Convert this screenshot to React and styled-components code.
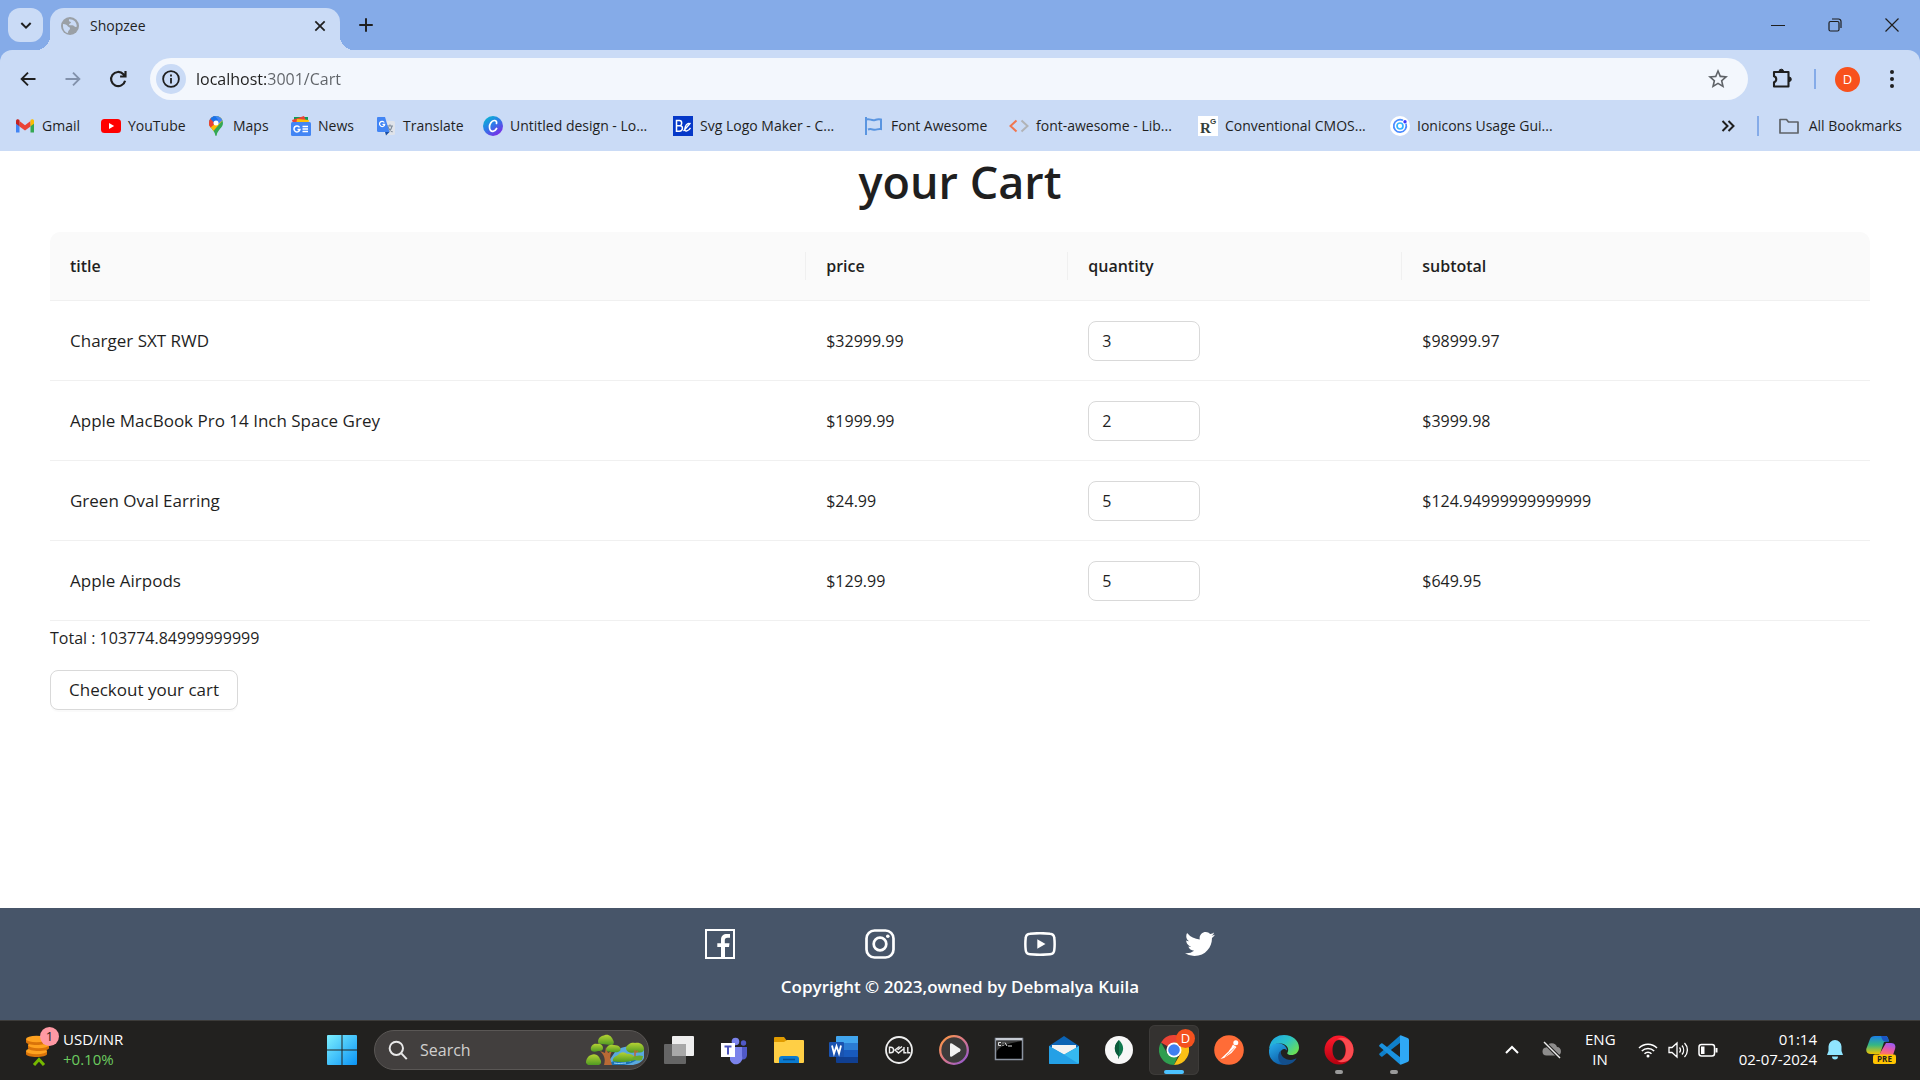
import React, { useState } from "react";
import styled, { createGlobalStyle, css } from "styled-components";
import { IoLogoTwitter } from "react-icons/io5";
import { MdStarBorder } from "react-icons/md";

const GlobalStyle = createGlobalStyle`
  *, *::before, *::after { box-sizing: border-box; }
  body {
    margin: 0;
    background: #fff;
    color: #1f1f1f;
    font-family: "Open Sans", "Noto Sans", sans-serif;
    font-size: 16px;
    line-height: 28px;
  }
  button, input { font: inherit; color: inherit; }
  button { border: 0; background: none; padding: 0; cursor: pointer; }
  a { color: inherit; text-decoration: none; }
  svg { display: block; flex: none; }
`;

const Screen = styled.div`
  min-height: 100vh;
  display: flex;
  flex-direction: column;
`;

/* ---------- browser frame ---------- */

const center = css`
  display: flex;
  align-items: center;
  justify-content: center;
`;

const TabStrip = styled.header`
  display: flex;
  height: 50px;
  padding: 8px 0 0 8px;
  background: #85abe8;
`;

const TabSearch = styled.button`
  ${center}
  width: 35px;
  height: 34px;
  border-radius: 12px;
  background: #cadbf6;
`;

const Tab = styled.div`
  position: relative;
  display: flex;
  align-items: center;
  gap: 11px;
  width: 290px;
  height: 42px;
  margin-left: 7px;
  padding: 0 11px 7px 11px;
  border-radius: 14px 14px 0 0;
  background: #cadbf6;
  font-size: 14px;
  line-height: 20px;

  &::before, &::after {
    content: "";
    position: absolute;
    bottom: 0;
    width: 14px;
    height: 14px;
  }
  &::before {
    right: 100%;
    background: radial-gradient(circle at 0 0, transparent 14px, #cadbf6 14px);
  }
  &::after {
    left: 100%;
    background: radial-gradient(circle at 100% 0, transparent 14px, #cadbf6 14px);
  }
`;

const TabTitle = styled.span`
  flex: 1;
`;

const PlainButton = styled.button`
  ${center}
  width: ${(p) => p.$w || 18}px;
  height: ${(p) => p.$h || 20}px;
`;

const NewTab = styled(PlainButton)`
  width: 34px;
  height: 34px;
  margin-left: 9px;
`;

const WindowControls = styled.div`
  display: flex;
  margin-left: auto;
  height: 34px;
`;

const Chrome = styled.div`
  background: #85abe8;
`;

const Bars = styled.div`
  height: 101px;
  border-radius: 12px 12px 0 0;
  background: #cadbf6;
`;

const Toolbar = styled.nav`
  display: flex;
  align-items: center;
  height: 58px;
  padding: 0 13px 0 5px;
`;

const OmniBox = styled.div`
  display: flex;
  align-items: center;
  flex: 1;
  height: 42px;
  margin: 0 12px 0 10px;
  padding: 0 18px 0 6px;
  border-radius: 21px;
  background: #f3f7fd;
  color: #5f6368;
`;

const SiteInfo = styled.button`
  ${center}
  width: 30px;
  height: 30px;
  margin-right: 10px;
  border-radius: 50%;
  background: #cadbf6;
`;

const Address = styled.input`
  flex: 1;
  border: 0;
  outline: 0;
  padding: 0;
  color: transparent;
  background: linear-gradient(90deg, #1f1f1f 70px, #5f6368 70px);
  background-clip: text;
  -webkit-background-clip: text;
  font-size: 16px;
`;

const Divider = styled.span`
  width: 2px;
  height: 20px;
  margin: 0 ${(p) => p.$right}px 0 ${(p) => p.$left}px;
  background: #85abe8;
`;

const Avatar = styled.button`
  ${center}
  width: 25px;
  height: 25px;
  margin-right: 17px;
  border-radius: 50%;
  background: #f8511d;
  color: #fff;
  font-size: 13px;
  line-height: 16px;
`;

const BookmarkBar = styled.nav`
  display: flex;
  align-items: center;
  height: 36px;
  padding: 0 18px 0 15px;
  font-size: 14px;
  line-height: 20px;
  white-space: nowrap;
`;

const BookmarkList = styled.div`
  display: grid;
  grid-template-columns: 86px 105px 85px 85px 107px 190px 191px 145px 189px 192px 170px;
  margin-right: auto;
`;

const Bookmark = styled.a`
  display: flex;
  align-items: center;
  gap: 7px;
`;

const Folder = styled(Bookmark)`
  gap: 10px;
`;

/* ---------- cart page ---------- */

const Main = styled.main`
  flex: 1;
  padding: 1px 50px 0;
`;

const Heading = styled.h1`
  margin: 0 0 20px;
  font-size: 45px;
  line-height: 60px;
  font-weight: 600;
  text-align: center;
`;

const CartTable = styled.table`
  width: 100%;
  table-layout: fixed;
  border-collapse: separate;
  border-spacing: 0;
`;

const Col = styled.col`
  width: ${(p) => p.$w};
`;

const Th = styled.th`
  padding: 20px 0;
  border-bottom: 1px solid #f0f0f0;
  background: #fafafa;
  text-align: left;
  font-weight: 600;

  &:first-child { border-top-left-radius: 10px; }
  &:last-child { border-top-right-radius: 10px; }
`;

const ThLabel = styled.span`
  display: block;
  padding: 0 20px;
  border-right: 1px solid #f0f0f0;

  ${Th}:last-child & { border-right: 0; }
`;

const Td = styled.td`
  height: 80px;
  padding: 1px 20px 0;
  border-bottom: 1px solid #f0f0f0;
`;

const TitleCell = styled(Td)`
  font-size: 17px;
`;

const Quantity = styled.input`
  display: block;
  width: 112px;
  height: 40px;
  padding: 0 13px;
  border: 1px solid #d9d9d9;
  border-radius: 8px;
  background: #fff;
  appearance: textfield;
  -moz-appearance: textfield;

  &::-webkit-inner-spin-button, &::-webkit-outer-spin-button {
    appearance: none;
    margin: 0;
  }
`;

const Total = styled.p`
  margin: 0;
  padding: 3px 0 18px;
`;

const Checkout = styled.button`
  height: 40px;
  padding: 0 18px;
  border: 1px solid #d9d9d9;
  border-radius: 8px;
  background: #fff;
  box-shadow: 0 2px 0 rgba(0, 0, 0, 0.02);
  font-size: 17px;
`;

const Footer = styled.footer`
  display: flex;
  flex-direction: column;
  align-items: center;
  height: 112px;
  padding-top: 18px;
  background: #475569;
  color: #fff;
  font-weight: 600;
  font-size: 17px;
`;

const Social = styled.div`
  display: flex;
  gap: 120px;
  margin-bottom: 11px;
`;

const SocialLink = styled.a`
  ${center}
  width: 40px;
  height: 36px;
`;

/* ---------- taskbar ---------- */

const Taskbar = styled.div`
  display: flex;
  align-items: center;
  height: 60px;
  padding: 0 24px 2px 0;
  border-top: 1px solid #3d3c3a;
  background: #22211f;
  color: #fff;
  font-size: 15px;
  line-height: 20px;
`;

const Widget = styled.button`
  display: flex;
  align-items: center;
  gap: 13px;
  width: 317px;
  padding-left: 25px;
  text-align: left;
`;

const Stack = styled.span`
  display: flex;
  flex-direction: column;
  padding-bottom: 2px;
  text-align: ${(p) => p.$align || "left"};
  width: ${(p) => (p.$w ? p.$w + "px" : "auto")};
`;

const Gain = styled.span`
  color: #6ccb5f;
`;

const IconHolder = styled.span`
  position: relative;
  display: block;
`;

const Badge = styled.span`
  ${center}
  position: absolute;
  top: ${(p) => p.$top}px;
  right: ${(p) => p.$right}px;
  width: 19px;
  height: 19px;
  border-radius: 50%;
  background: ${(p) => p.$bg};
  color: ${(p) => p.$fg};
  font-size: 13px;
  line-height: 16px;
`;

const Apps = styled.div`
  display: flex;
  align-items: center;
  gap: 5px;
`;

const AppButton = styled.button`
  ${center}
  position: relative;
  width: 50px;
  height: 50px;
  border-radius: 6px;
  background: ${(p) => (p.$state === "active" ? "#343230" : "transparent")};
  box-shadow: ${(p) => (p.$state === "active" ? "inset 0 0 0 1px #3d3b39" : "none")};

  &::after {
    content: "";
    display: ${(p) => (p.$state ? "block" : "none")};
    position: absolute;
    bottom: 1px;
    width: ${(p) => (p.$state === "active" ? 20 : 8)}px;
    height: 4px;
    border-radius: 2px;
    background: ${(p) => (p.$state === "active" ? "#4cc2ff" : "#9a9a9a")};
  }
`;

const SearchBox = styled.label`
  display: flex;
  align-items: center;
  gap: 12px;
  width: 275px;
  height: 40px;
  margin-left: 2px;
  padding: 0 2px 0 13px;
  border: 1px solid #5a5755;
  border-radius: 20px;
  background: #423f3e;
`;

const SearchInput = styled.input`
  flex: 1;
  min-width: 0;
  border: 0;
  outline: 0;
  padding: 0;
  background: none;
  font-size: 16px;

  &::placeholder { color: #d0cfce; opacity: 1; }
`;

const Tray = styled.div`
  display: flex;
  align-items: center;
  gap: 23px;
  margin-left: auto;
`;

const TrayGroup = styled.button`
  display: flex;
  align-items: center;
  gap: 10px;
  margin-right: -3px;
`;

const Clock = styled.button`
  display: flex;
  align-items: center;
  gap: 10px;
`;

/* ---------- icons ---------- */

const Line = ({ s = 20, w = 2, vb = 24, c = "currentColor", fill = "none", children, ...rest }) => (
  <svg width={s} height={s} viewBox={`0 0 ${vb} ${vb}`} fill={fill} stroke={c} strokeWidth={w} {...rest}>
    {children}
  </svg>
);

const Globe = () => (
  <svg width="18" height="18" viewBox="0 0 18 18">
    <circle cx="9" cy="9" r="9" fill="#9aa0a6" />
    <path d="M2 7c3 0 4 1 5 2.500 1 1 2 .5 2 2s-2 1.500-2 4.500C4 15.500 2 12.500 2 9zM8 2.300c-.5 1.700.5 2.700 2 2.700 0 1.500-2 1.500-2 3 1.500 1 4-.5 5 1 1 1.300 2 1 2.800.8C16 5 12.500 2 8 2.300z" fill="#cadbf6" />
  </svg>
);

const Gmail = () => (
  <svg width="20" height="20" viewBox="0 0 20 20">
    <path d="M1 5v11.500h3.500V8z" fill="#4285f4" />
    <path d="M19 5v11.500h-3.500V8z" fill="#34a853" />
    <path d="M4.500 5v5.500L10 14.500l5.500-4V5L10 9.200z" fill="#ea4335" />
    <path d="M1 5.300C1 3.200 3 2.800 4.500 4v6.300L1 7.700z" fill="#c5221f" />
    <path d="M19 5.300c0-2.100-2-2.500-3.500-1.300v6.300L19 7.700z" fill="#fbbc04" />
  </svg>
);

const YouTube = () => (
  <svg width="20" height="20" viewBox="0 0 20 20">
    <rect y="3" width="20" height="14" rx="3.500" fill="#f00" />
    <path d="M8 7v6l5.200-3z" fill="#fff" />
  </svg>
);

const Maps = () => (
  <svg width="20" height="20" viewBox="0 0 20 20">
    <defs>
      <clipPath id="pin"><path d="M10 0a7 7 0 0 0-7 7c0 5 5.500 6.500 6.300 12.300.1.900 1.300.9 1.400 0C11.500 13.500 17 12 17 7a7 7 0 0 0-7-7z" /></clipPath>
    </defs>
    <g clipPath="url(#pin)">
      <path d="M0 0h20v20H0z" fill="#34a853" />
      <path d="M17 0v4L6.500 16 2 10 10 1z" fill="#fbbc04" />
      <path d="M0 0h8L10 7 4 12 0 8z" fill="#ea4335" />
      <path d="M5 0h14l-3 4.500-4 4L5 3z" fill="#4285f4" />
      <path d="M5 0h4l3 3.500L8 8 3 4z" fill="#1a73e8" />
      <path d="M0 3l3.500-1L8 6.500 4 12 0 8z" fill="#ea4335" />
    </g>
    <circle cx="10" cy="7" r="2.500" fill="#fff" />
  </svg>
);

const News = () => (
  <svg width="20" height="20" viewBox="0 0 20 20">
    <path d="M3 1h14v8H3z" fill="#0c9d58" />
    <path d="M1 4l12-4 3 7H2z" fill="#ea4335" />
    <path d="M6 3l12 1-1 5H5z" fill="#ffc107" />
    <rect y="6" width="20" height="14" rx="1.500" fill="#4285f4" />
    <path d="M8.500 11.300a3 3 0 1 0 .4 2.200H6.500M11.500 10.500H17M11.500 13H17M11.500 15.500H17" fill="none" stroke="#fff" strokeWidth="1.500" />
  </svg>
);

const Translate = () => (
  <svg width="20" height="20" viewBox="0 0 20 20">
    <rect x="8" y="5" width="11" height="14" rx="1.500" fill="#dfe3ea" />
    <path d="M11 10h6M14 8.500V10M16 10c-.5 3-2 5-4 6M12 11c.5 2 2 3.500 4.500 5" stroke="#7f8b99" fill="none" strokeWidth="1.100" />
    <path d="M1.500 1H9l4.500 15H2.500A1.500 1.500 0 0 1 1 14.500V2z" fill="#4285f4" />
    <path d="M9 16h4.500L10 19.500z" fill="#174ea6" />
    <path d="M8.300 6.500a2.600 2.600 0 1 0 .4 1.800H6.500" stroke="#fff" fill="none" strokeWidth="1.200" />
  </svg>
);

const Canva = () => (
  <svg width="20" height="20" viewBox="0 0 20 20">
    <defs>
      <linearGradient id="canva" x1="0" y1="0" x2=".7" y2="1">
        <stop offset="0" stopColor="#00c4cc" /><stop offset=".5" stopColor="#2a7de8" /><stop offset="1" stopColor="#7d2ae8" />
      </linearGradient>
    </defs>
    <circle cx="10" cy="10" r="10" fill="url(#canva)" />
    <path d="M13.500 7.500c.5-1.800-.5-3.200-2.300-3C8.500 4.800 6.500 8 6.500 11s1.500 4.500 3.500 4.300c1.500-.2 2.800-1.300 3.600-2.800" fill="none" stroke="#fff" strokeWidth="1.700" strokeLinecap="round" />
  </svg>
);

const LogoMaker = () => (
  <svg width="20" height="20" viewBox="0 0 20 20">
    <path d="M0 0h20v20H0z" fill="#0538c8" />
    <path d="M3.500 4.500v10.700h2.800c4 0 4-5.500.8-5.500H4h2.500c3 0 2.800-5.200 0-5.200z" fill="none" stroke="#fff" strokeWidth="1.500" />
    <path d="M17 8.300c-.5-1.600-3.500-.8-4.700 2.400s0 4.700 1.600 4.200 3-1.800 3.600-3M10.500 15l7-8" fill="none" stroke="#fff" strokeWidth="1.300" />
  </svg>
);

const Flag = () => (
  <svg width="20" height="20" viewBox="0 0 20 20" fill="none" stroke="#5a95e0" strokeWidth="2">
    <path d="M2 1v18" />
    <path d="M2 3.500c4-1.500 5 1.500 9 .5 2.500-1 4-1 6-.5v9.500c-3-.5-4 .8-6 .8-2.500 0-4-1.500-7-.3" />
  </svg>
);

const Code = () => (
  <svg width="20" height="20" viewBox="0 0 20 20" fill="none" strokeWidth="2">
    <path d="M7.500 4.500 1.500 10l6 5.500" stroke="#f0764f" />
    <path d="M12.500 4.500l6 5.500-6 5.500" stroke="#b1b3b6" />
  </svg>
);

const ResearchGate = () => (
  <svg width="20" height="20" viewBox="0 0 20 20">
    <path d="M0 0h20v20H0z" fill="#fff" />
    <text x="2" y="17" fontFamily="Liberation Serif, serif" fontSize="15" fontWeight="700" fill="#333f3c">R</text>
    <text x="12" y="8" fontFamily="Liberation Sans, sans-serif" fontSize="8" fontWeight="700" fill="#333f3c">G</text>
  </svg>
);

const Ionic = () => (
  <svg width="20" height="20" viewBox="0 0 20 20">
    <circle cx="10" cy="10" r="10" fill="#fff" />
    <path d="M13 4.300a6.300 6.300 0 1 0 3 3.500" fill="none" stroke="#4a8bff" strokeWidth="1.700" />
    <circle cx="10" cy="10" r="3" fill="none" stroke="#35b3ff" strokeWidth="1.700" />
    <circle cx="15" cy="5.800" r="1.700" fill="#3b3bff" />
  </svg>
);

const Puzzle = () => (
  <Line s={24} w={2.1} strokeLinejoin="round">
    <path d="M4 5h14.500v14.500H4v-4.300c3-.7 3-5.200 0-5.900z" />
    <path d="M9 4.500a2.300 2.300 0 0 1 4.600 0zM19 10a2.300 2.300 0 0 1 0 4.600z" fill="currentColor" strokeWidth="1" />
  </Line>
);

const Facebook = () => (
  <svg width="30" height="30" viewBox="0 0 30 30">
    <path d="M1 1h28v28H1z" fill="none" stroke="#fff" strokeWidth="2" />
    <path d="M16 29V18h-3.700v-3.700H16V11c0-4.300 2.300-6 6-6h3v3.700h-2.500c-2 0-2.700 1-2.700 2.600v3H24.500L24 18h-4v11z" fill="#fff" />
  </svg>
);

const Instagram = () => (
  <svg width="30" height="30" viewBox="0 0 30 30" fill="none" stroke="#fff" strokeWidth="2.700">
    <rect x="1.500" y="1.500" width="27" height="27" rx="8" />
    <circle cx="15" cy="15" r="6.300" />
    <circle cx="22.800" cy="7.300" r="1.800" fill="#fff" stroke="none" />
  </svg>
);

const YouTubeOutline = () => (
  <svg width="32" height="24" viewBox="0 0 32 24">
    <path d="M6 1.700Q16 .7 26 1.700 30 2 30.300 6q.7 6 0 12-.3 4-4.300 4.300-10 1-20 0Q2 22 1.700 18q-.7-6 0-12Q2 2 6 1.700z" fill="none" stroke="#fff" strokeWidth="2.500" />
    <path d="M13.300 7.300v9.400L21.500 12z" fill="#fff" />
  </svg>
);

const Coins = () => (
  <svg width="25" height="32" viewBox="0 0 25 32">
    {[13, 7, 1].map((y, i) => (
      <g key={y} transform={`translate(${i === 1 ? 2 : 0} ${y})`}>
        <path d="M1 4v3c0 4 21 4 21 0V4z" fill="#d9730a" />
        <ellipse cx="11.500" cy="4" rx="10.500" ry="3.300" fill="#ffa21f" />
      </g>
    ))}
    <path d="M9 31l5-5.500L19 31" fill="none" stroke="#76b900" strokeWidth="3" />
  </svg>
);

const Windows = () => (
  <svg width="30" height="30" viewBox="0 0 30 30">
    <defs>
      <linearGradient id="win" x1="0" y1="0" x2="1" y2="1">
        <stop offset="0" stopColor="#7df0ff" /><stop offset="1" stopColor="#0a93f5" />
      </linearGradient>
    </defs>
    <path d="M1 0h13.500v14.500H0V1a1 1 0 0 1 1-1zM15.500 0H29a1 1 0 0 1 1 1v13.500H15.500zM0 15.500h14.500V30H1a1 1 0 0 1-1-1zM15.500 15.500H30V29a1 1 0 0 1-1 1H15.500z" fill="url(#win)" />
  </svg>
);

const Landscape = () => (
  <svg width="60" height="32" viewBox="0 0 60 32">
    <defs>
      <linearGradient id="leaf" x1="0" y1="0" x2="0" y2="1">
        <stop offset="0" stopColor="#b5d334" /><stop offset="1" stopColor="#4f9a22" />
      </linearGradient>
    </defs>
    <path d="M29 18c7-7 19-7 29-2v8c-2 4-6 6-11 7H20z" fill="#5aa9df" />
    <path d="M22 31c5-6 18-8 30-6-4 3-8 5-14 6z" fill="#1b72b4" />
    <path d="M32 26c5 1 9 0 13 1M28 29c5 1 8 0 12 0" stroke="#9bdcff" fill="none" />
    <path d="M18 31c2-6 0-10-4-14l5 2 1-6 2 6 5-3c-4 5-3 9-1 15z" fill="#b96a35" />
    <g fill="url(#leaf)">
      <path d="M12 8c0-5 4-6 7-7 4-1 7 2 8 5 2 3 0 5-2 5l-9-1c-3 0-4-1-4-2z" />
      <path d="M5 16c-1-4 3-7 6-6 4-1 6 2 6 4 0 3-3 3-5 3-3 1-6 1-7-1z" />
      <path d="M20 15c1-4 5-5 8-4 5 0 8 3 6 6-3 2-5 1-7 1s-7 0-7-3z" />
      <path d="M0 29c0-4 2-7 5-8 5-2 8 1 9 4 2 3 1 5-1 6H2z" />
      <path d="M27 27c-1-3 3-5 5-6 3-4 7-3 9-1 5-1 6 3 12 4-5 4-20 5-26 3z" />
      <path d="M40 14c1-4 6-6 9-5 5-1 9 2 9 6s-5 4-8 3c-5 2-10 0-10-4z" />
    </g>
    <path d="M49 23v-7M49 19l3-2" stroke="#b96a35" strokeWidth="1.500" />
    <path d="M46 24c4-3 8-3 11-2l-1 4c-3 1-7 1-10-2z" fill="#6aaa2c" />
  </svg>
);

const TaskView = () => (
  <svg width="30" height="30" viewBox="0 0 30 30">
    <rect x="8" y="1" width="22" height="20" rx="1" fill="#eee" />
    <rect x="0" y="9" width="22" height="20" rx="1" fill="#6d6d6d" opacity=".9" />
    <path d="M8 9h14v12H8z" fill="#a8a8a8" />
  </svg>
);

const Teams = () => (
  <svg width="30" height="30" viewBox="0 0 30 30">
    <circle cx="16.500" cy="6.500" r="3.800" fill="#7b83eb" /><circle cx="24.500" cy="8" r="2.700" fill="#5059c9" />
    <path d="M20 12h8v8c0 3-2 5-5 4.500z" fill="#5059c9" />
    <path d="M11 12h12v9a6 6 0 0 1-12 4z" fill="#7b83eb" />
    <path d="M2 8h14v14H2z" fill="#fff" />
    <path d="M5.500 11.500h7M9 11.500v8" stroke="#4b53bc" strokeWidth="2" />
  </svg>
);

const Explorer = () => (
  <svg width="30" height="30" viewBox="0 0 30 30">
    <path d="M0 3q0-1 1-1h9l3 4v6H0z" fill="#e09b00" />
    <path d="M0 7h10l3-2h16q1 0 1 1v21q0 1-1 1H1q-1 0-1-1z" fill="#ffcf45" />
    <path d="M5 28v-4q0-3 3-3h14q3 0 3 3v4z" fill="#0a7bd0" />
    <path d="M9 24.500h12" stroke="#054f91" strokeWidth="1.500" />
  </svg>
);

const Word = () => (
  <svg width="30" height="30" viewBox="0 0 30 30">
    <path d="M7 2q0-1 1-1h21v7H7z" fill="#41a5ee" /><path d="M7 8h22v7H7z" fill="#2b7cd3" />
    <path d="M7 15h22v7H7z" fill="#185abd" /><path d="M7 22h22v6H8q-1 0-1-1z" fill="#103f91" />
    <rect y="7" width="15" height="15" rx="1" fill="#1a53b0" />
    <path d="M3 10.500l2 8 2.500-7.500L10 18.500l2-8" fill="none" stroke="#fff" strokeWidth="1.800" />
  </svg>
);

const Dell = () => (
  <svg width="30" height="30" viewBox="0 0 30 30" fill="none" stroke="#eee">
    <circle cx="15" cy="15" r="13" strokeWidth="1.800" />
    <path d="M5.500 12.200v5.600h1.300c3.700 0 3.700-5.600 0-5.600zM15.500 11.500l-4.500 3.500 3.500 3 5-4M18 11.500l-4.500 3.500M20 12v5.800h2.500M23.800 12v5.800h2.500" strokeWidth="1.400" />
  </svg>
);

const MediaPlayer = () => (
  <svg width="30" height="30" viewBox="0 0 30 30">
    <defs>
      <linearGradient id="media" x1="0" y1="0" x2="1" y2="1">
        <stop offset="0" stopColor="#ff9b3d" /><stop offset=".5" stopColor="#d9778c" /><stop offset="1" stopColor="#8a55d8" />
      </linearGradient>
    </defs>
    <circle cx="15" cy="15" r="13.800" fill="#3c3b3b" stroke="url(#media)" strokeWidth="2.300" />
    <path d="M11 9.500q0-2 2-1l8 5.300q1.500 1.200 0 2.400l-8 5.300q-2 1-2-1z" fill="#f3f3f3" />
  </svg>
);

const Terminal = () => (
  <svg width="30" height="30" viewBox="0 0 30 30">
    <path d="M1.500 3.500h27v21h-27z" fill="#000" stroke="#8b93a0" strokeWidth="1.500" />
    <path d="M2 3h26v2.500H2z" fill="#c6cbd3" />
    <path d="M2 6h26C17 8 5 10 2 18z" fill="#3a3a3a" />
    <path d="M7 7.500H4.500v3H7M9 7.500v1M9 10v1M11 7.500l2 3.500M14 11h4" fill="none" stroke="#ddd" />
  </svg>
);

const Mail = () => (
  <svg width="30" height="30" viewBox="0 0 30 30">
    <path d="M0 11 15 1l15 10v4H0z" fill="#0b63b4" />
    <path d="M3 10h24v3L15 20 3 13z" fill="#f2f2f2" />
    <path d="M0 11l15 8.500L30 11v17q0 1-1 1H1q-1 0-1-1z" fill="#35b9f1" />
    <path d="M0 11l15 8.500L30 29H1q-1 0-1-1z" fill="#1c92e0" opacity=".65" />
  </svg>
);

const Mongo = () => (
  <svg width="30" height="30" viewBox="0 0 30 30">
    <circle cx="15" cy="15" r="14" fill="#f7f7f7" />
    <path d="M15 5c5 5 6 11 0 17-6-6-5-12 0-17z" fill="#117a50" />
    <path d="M15 5v19c-1-1-1-2-.500-3C9 16 10 9 15 5z" fill="#0a5a3b" />
  </svg>
);

const ChromeLogo = () => (
  <svg width="30" height="30" viewBox="0 0 30 30">
    <path d="M15 15 2 7.500A15 15 0 0 1 28 7.500H15z" fill="#ea4335" />
    <path d="M15 15h6.500L15 30A15 15 0 0 1 2 7.500l6.500 11.200z" fill="#2f9e4f" />
    <path d="M15 7.500h13A15 15 0 0 1 15 30l6.500-11.300z" fill="#fbc116" />
    <circle cx="15" cy="15" r="7.500" fill="#fff" /><circle cx="15" cy="15" r="5.800" fill="#3f7ff0" />
  </svg>
);

const Opera = () => (
  <svg width="30" height="30" viewBox="0 0 30 30">
    <defs>
      <linearGradient id="opera" x1="0" y1="0" x2="0" y2="1">
        <stop offset="0" stopColor="#ff1b2d" /><stop offset="1" stopColor="#b4000f" />
      </linearGradient>
    </defs>
    <path fillRule="evenodd" d="M15 .5a14.500 14.500 0 1 1 0 29 14.500 14.500 0 0 1 0-29zM15 5c-4 0-6.500 4.500-6.500 10S11 25 15 25s6.500-4.500 6.500-10S19 5 15 5z" fill="url(#opera)" />
    <path d="M13 4.500C17 .5 29.500 3 29.500 15S17 29.500 13 25.500c5 1.500 9-4 9-10.500s-4-12-9-10.500z" fill="#fb4b50" />
  </svg>
);

const Edge = () => (
  <svg width="30" height="30" viewBox="0 0 30 30">
    <defs>
      <linearGradient id="edge" x1="0" y1=".1" x2="1" y2=".8">
        <stop offset="0" stopColor="#1fa5e8" /><stop offset=".5" stopColor="#2cc3c5" /><stop offset="1" stopColor="#6fe24c" />
      </linearGradient>
      <linearGradient id="edgeBlue" x1="0" y1="0" x2=".6" y2="1">
        <stop offset="0" stopColor="#28b0ee" /><stop offset="1" stopColor="#0c59a4" />
      </linearGradient>
    </defs>
    <path d="M0 14C1 5 7 0 15 0c9 0 15 6 15 12.500 0 5-4 7.500-7.500 7.500-3 0-5-1-4-2.500C20.500 14 18 9 12 8.500 6 8 2 10.500 0 14z" fill="url(#edge)" />
    <path d="M0 15c1-5 6-7.500 11-6.500 4 .7 7 3.500 7 7-2-3-6-1.500-6.500 2-.5 5 4 11 9.500 10.500C11 33-1 27 0 15z" fill="url(#edgeBlue)" />
    <path d="M11.800 15.500c-1 5 4 9.500 10 9.500 2.500 0 4-1 5.700-1.700C26 27 21 30 16 30 9 29 7 20 11.800 15.500z" fill="#134f8c" />
  </svg>
);

const Postman = () => (
  <svg width="30" height="30" viewBox="0 0 30 30">
    <circle cx="15" cy="15" r="14.800" fill="#ff6c37" />
    <circle cx="21.800" cy="7.800" r="2.500" fill="#fff" />
    <path d="M19 9.500l3.500 2.500-5 6-7.500 5-3.500 1 8-7.500z" fill="#fff" />
    <path d="M18 11.500l-7.500 7M20.500 13l-9 8.500" stroke="#ff6c37" strokeWidth=".7" />
  </svg>
);

const VsCode = () => (
  <svg width="30" height="30" viewBox="0 0 30 30">
    <path d="M21.500 7.500 3.500 21.500q-.7.500-1.400 0L.5 20q-.7-.7 0-1.400L21 .6z" fill="#0f7fc9" />
    <path d="M21.500 22.500 3.500 8.500q-.7-.5-1.400 0L.5 10q-.7.700 0 1.400L21 29.400z" fill="#1a92df" />
    <path d="M21.700.3 28.600 3q1.400.6 1.400 2v20q0 1.400-1.400 2l-6.900 2.700q-.7.200-.7-1V1.300q0-1.200.7-1z" fill="#2fa8f5" />
  </svg>
);

const CloudOff = () => (
  <svg width="20" height="18" viewBox="0 0 20 18">
    <path d="M4.500 14.500a4 4 0 0 1 0-8A5.500 5.500 0 0 1 15 6a4.300 4.300 0 0 1 .5 8.500z" fill="#8e8d8c" />
    <path d="M2 1l16 16" stroke="#22211f" strokeWidth="3.500" /><path d="M2 1l16 16" stroke="#eee" strokeWidth="1.400" />
  </svg>
);

const Wifi = () => (
  <Line s={20} vb={20} w={1.5}>
    <path d="M1 8a12.700 12.700 0 0 1 18 0M3.800 11a8.800 8.800 0 0 1 12.400 0M6.500 13.800a5 5 0 0 1 7 0" />
    <circle cx="10" cy="16" r="1.500" fill="currentColor" stroke="none" />
  </Line>
);

const Speaker = () => (
  <Line s={20} vb={20} w={1.3}>
    <path d="M1 7.500h3L9 3v14l-5-4.500H1zM11.500 7.500a4 4 0 0 1 0 5M14 5.500a7 7 0 0 1 0 9M16.500 3a10 10 0 0 1 0 14" />
  </Line>
);

const Battery = () => (
  <Line s={20} vb={20} w={1.5}>
    <rect x="1" y="4.500" width="15.500" height="11.500" rx="2.500" />
    <path d="M3 6.500h3.500v7.500H3zM17.500 8h2v4.500h-2z" fill="currentColor" stroke="none" />
  </Line>
);

const Bell = () => (
  <svg width="16" height="20" viewBox="0 0 16 20">
    <path d="M8 0a6.500 6.500 0 0 1 6.500 6.500V11l1.500 4H0l1.500-4V6.500A6.500 6.500 0 0 1 8 0zM5 16.500h6a3 3 0 0 1-6 0z" fill="#90e5ff" />
  </svg>
);

const Copilot = () => (
  <svg width="30" height="30" viewBox="0 0 30 30">
    <defs>
      <linearGradient id="cpA" x1="0" y1="0" x2="0" y2="1">
        <stop offset="0" stopColor="#1b7fe8" /><stop offset=".5" stopColor="#35b783" /><stop offset="1" stopColor="#f2c500" />
      </linearGradient>
      <linearGradient id="cpB" x1=".3" y1="1" x2=".7" y2="0">
        <stop offset="0" stopColor="#ff7a5c" /><stop offset=".5" stopColor="#e458a8" /><stop offset="1" stopColor="#9b5bf5" />
      </linearGradient>
    </defs>
    <path d="M9 1h10c3 0 3 2 4 5l-5 1-4 12H5c-4 0-6-3-4-7L4 4q1-3 5-3z" fill="url(#cpA)" />
    <path d="M11 1h8c3 0 3 3 4 6-6-1-6 0-8-6z" fill="#1a55c4" />
    <path d="M20 8h5c4 0 5 3 4 6l-2 6H13z" fill="url(#cpB)" />
    <rect x="7" y="19.500" width="23" height="9.500" rx="2" fill="#ffc400" />
    <text x="18.500" y="27.300" textAnchor="middle" fontFamily="Open Sans, sans-serif" fontSize="8" fontWeight="700" fill="#1f1f1f">PRE</text>
  </svg>
);

/* ---------- data ---------- */

const bookmarks = [
  ["Gmail", Gmail],
  ["YouTube", YouTube],
  ["Maps", Maps],
  ["News", News],
  ["Translate", Translate],
  ["Untitled design - Lo...", Canva],
  ["Svg Logo Maker - C...", LogoMaker],
  ["Font Awesome", Flag],
  ["font-awesome - Lib...", Code],
  ["Conventional CMOS...", ResearchGate],
  ["Ionicons Usage Gui...", Ionic],
];

const initialCart = [
  { title: "Charger SXT RWD", price: 32999.99, quantity: 3 },
  { title: "Apple MacBook Pro 14 Inch Space Grey", price: 1999.99, quantity: 2 },
  { title: "Green Oval Earring", price: 24.99, quantity: 5 },
  { title: "Apple Airpods", price: 129.99, quantity: 5 },
];

const columns = [
  ["title", "41.55%"],
  ["price", "14.4%"],
  ["quantity", "18.35%"],
  ["subtotal", "auto"],
];

const social = [
  ["Facebook", <Facebook />],
  ["Instagram", <Instagram />],
  ["YouTube", <YouTubeOutline />],
  ["Twitter", <IoLogoTwitter size={32} />],
];

const apps = [
  ["Task view", TaskView],
  ["Teams", Teams],
  ["File Explorer", Explorer],
  ["Word", Word],
  ["Dell", Dell],
  ["Media Player", MediaPlayer],
  ["Command Prompt", Terminal],
  ["Mail", Mail],
  ["MongoDB", Mongo],
  ["Chrome", ChromeLogo, "active"],
  ["Postman", Postman],
  ["Edge", Edge],
  ["Opera", Opera, "open"],
  ["Visual Studio Code", VsCode, "open"],
];

function BrowserFrame() {
  return (
    <Chrome>
      <TabStrip>
        <TabSearch aria-label="Search tabs">
          <Line s={16} w={3}><path d="M5 9l7 7 7-7" /></Line>
        </TabSearch>
        <Tab>
          <Globe />
          <TabTitle>Shopzee</TabTitle>
          <PlainButton aria-label="Close tab">
            <Line s={16} w={2.6}><path d="M5 5l14 14M19 5L5 19" /></Line>
          </PlainButton>
        </Tab>
        <NewTab aria-label="New tab">
          <Line s={18} w={2.6}><path d="M12 3v18M3 12h18" /></Line>
        </NewTab>
        <WindowControls>
          <PlainButton $w={57} $h={34} aria-label="Minimize">
            <Line s={14} vb={14} w={1}><path d="M0 7.500h14" /></Line>
          </PlainButton>
          <PlainButton $w={57} $h={34} aria-label="Restore">
            <Line s={14} vb={14} w={1.2}>
              <rect x="1" y="3.500" width="10" height="9.500" rx="1.500" /><path d="M4 1h6.500A2.500 2.500 0 0 1 13 3.500V10" />
            </Line>
          </PlainButton>
          <PlainButton $w={57} $h={34} aria-label="Close">
            <Line s={14} vb={14} w={1.2}><path d="M.5.5l13 13M13.500.5l-13 13" /></Line>
          </PlainButton>
        </WindowControls>
      </TabStrip>
      <Bars>
        <Toolbar>
          <PlainButton $w={45} $h={40} aria-label="Back">
            <Line s={18} w={2.5}><path d="M22 12H4M12 3.500L3.500 12l8.500 8.500" /></Line>
          </PlainButton>
          <PlainButton $w={45} $h={40} aria-label="Forward">
            <Line s={18} w={2.5} c="#8291ab"><path d="M2 12h18M12 3.500l8.500 8.500-8.500 8.500" /></Line>
          </PlainButton>
          <PlainButton $w={45} $h={40} aria-label="Reload">
            <Line s={20} w={2.6}><path d="M20.500 14a8.500 8.500 0 1 1-2-7.700L21 9M21 2.500V9h-6.500" /></Line>
          </PlainButton>
          <OmniBox>
            <SiteInfo aria-label="Site information">
              <Line s={18} w={2.4} c="#1f1f1f"><circle cx="12" cy="12" r="10.500" /><path d="M12 10.500V18M12 6v2.500" /></Line>
            </SiteInfo>
            <Address aria-label="Address" defaultValue="localhost:3001/Cart" />
            <MdStarBorder size={24} />
          </OmniBox>
          <PlainButton $w={44} $h={40} aria-label="Extensions"><Puzzle /></PlainButton>
          <Divider $left={10} $right={19} />
          <Avatar aria-label="Profile">D</Avatar>
          <PlainButton $w={30} $h={40} aria-label="Menu">
            <Line s={20} vb={20} w={0} fill="currentColor">
              <circle cx="10" cy="3" r="2" /><circle cx="10" cy="10" r="2" /><circle cx="10" cy="17" r="2" />
            </Line>
          </PlainButton>
        </Toolbar>
        <BookmarkBar>
          <BookmarkList>
            {bookmarks.map(([label, Icon]) => (
              <Bookmark key={label} href="#"><Icon />{label}</Bookmark>
            ))}
          </BookmarkList>
          <PlainButton aria-label="More bookmarks">
            <Line s={14} vb={14} w={2}><path d="M1.500 2l5 5-5 5M7.500 2l5 5-5 5" /></Line>
          </PlainButton>
          <Divider $left={20} $right={20} />
          <Folder href="#">
            <Line s={20} vb={20} w={1.7} c="#5f6368"><path d="M1 3.500h6.500l2 2.500H19v11H1z" strokeLinejoin="round" /></Line>
            All Bookmarks
          </Folder>
        </BookmarkBar>
      </Bars>
    </Chrome>
  );
}

function Cart() {
  const [items, setItems] = useState(initialCart);
  const total = items.reduce((sum, item) => sum + item.price * item.quantity, 0);
  const change = (index, value) =>
    setItems(items.map((item, i) => (i === index ? { ...item, quantity: Number(value) } : item)));

  return (
    <Main>
      <Heading>your Cart</Heading>
      <CartTable>
        <colgroup>{columns.map(([name, w]) => <Col key={name} $w={w} />)}</colgroup>
        <thead>
          <tr>{columns.map(([name]) => <Th key={name} scope="col"><ThLabel>{name}</ThLabel></Th>)}</tr>
        </thead>
        <tbody>
          {items.map((item, i) => (
            <tr key={item.title}>
              <TitleCell>{item.title}</TitleCell>
              <Td>${item.price}</Td>
              <Td>
                <Quantity
                  type="number"
                  aria-label={`Quantity of ${item.title}`}
                  value={item.quantity}
                  onChange={(e) => change(i, e.target.value)}
                />
              </Td>
              <Td>${item.price * item.quantity}</Td>
            </tr>
          ))}
        </tbody>
      </CartTable>
      <Total>Total : {total}</Total>
      <Checkout>Checkout your cart</Checkout>
    </Main>
  );
}

function WindowsTaskbar() {
  return (
    <Taskbar>
      <Widget>
        <IconHolder>
          <Coins />
          <Badge $top={-7} $right={-9} $bg="#ff99a4" $fg="#1f1f1f">1</Badge>
        </IconHolder>
        <Stack><span>USD/INR</span><Gain>+0.10%</Gain></Stack>
      </Widget>
      <Apps>
        <AppButton aria-label="Start"><Windows /></AppButton>
        <SearchBox>
          <Line s={20} w={2.4} c="#e8e8e8"><circle cx="10" cy="10" r="8" /><path d="M16 16l6.500 7" /></Line>
          <SearchInput placeholder="Search" aria-label="Search" />
          <Landscape />
        </SearchBox>
        {apps.map(([name, Icon, state]) => (
          <AppButton key={name} aria-label={name} $state={state}>
            <IconHolder>
              <Icon />
              {name === "Chrome" && <Badge $top={-6} $right={-6} $bg="#f4511e" $fg="#fff">D</Badge>}
            </IconHolder>
          </AppButton>
        ))}
      </Apps>
      <Tray>
        <PlainButton $w={14} aria-label="Show hidden icons">
          <Line s={14} vb={14} w={2}><path d="M1 10l6-6 6 6" /></Line>
        </PlainButton>
        <CloudOff />
        <Stack $align="center" $w={30}><span>ENG</span><span>IN</span></Stack>
        <TrayGroup aria-label="Network, sound and battery"><Wifi /><Speaker /><Battery /></TrayGroup>
        <Clock>
          <Stack $align="right" $w={79}><span>01:14</span><span>02-07-2024</span></Stack>
          <Bell />
        </Clock>
        <Copilot />
      </Tray>
    </Taskbar>
  );
}

export default function App() {
  return (
    <Screen>
      <GlobalStyle />
      <BrowserFrame />
      <Cart />
      <Footer>
        <Social>
          {social.map(([name, icon]) => <SocialLink key={name} href="#" aria-label={name}>{icon}</SocialLink>)}
        </Social>
        <span>Copyright © 2023,owned by Debmalya Kuila</span>
      </Footer>
      <WindowsTaskbar />
    </Screen>
  );
}
